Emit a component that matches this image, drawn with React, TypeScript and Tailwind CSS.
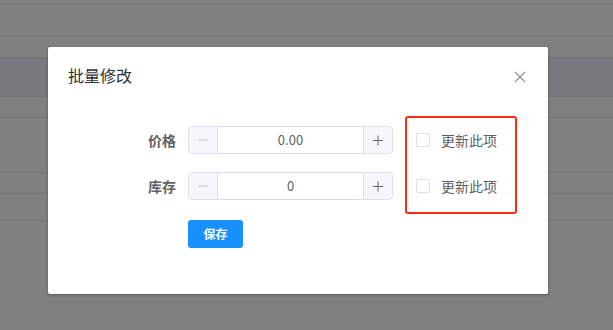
import React from 'react';

const font = { fontFamily: '"Noto Sans CJK SC", "Noto Sans", sans-serif' };

const NumberInput: React.FC<{ value: string }> = ({ value }) => (
  <div className="flex h-[28px] w-[205px] rounded-[4px] border border-[#dcdfe6] bg-white">
    <div className="flex w-[29px] items-center justify-center rounded-l-[4px] border-r border-[#dcdfe6] bg-[#f5f7fa] text-[#c0c4cc]">
      <svg width="12" height="12" viewBox="0 0 12 12">
        <path d="M1 6h10" stroke="currentColor" strokeWidth="1" />
      </svg>
    </div>
    <div className="flex flex-1 items-center justify-center text-[13px] text-[#606266]">{value}</div>
    <div className="flex w-[29px] items-center justify-center rounded-r-[4px] border-l border-[#dcdfe6] bg-[#f5f7fa] text-[#606266]">
      <svg width="12" height="12" viewBox="0 0 12 12">
        <path d="M1 6.5h10M6 1.5v10" stroke="currentColor" strokeWidth="1" />
      </svg>
    </div>
  </div>
);

const Row: React.FC<{ label: string; value: string }> = ({ label, value }) => (
  <div className="flex items-center">
    <div className="w-[80px] pr-[12px] text-right text-[14px] font-bold text-[#606266]">{label}</div>
    <NumberInput value={value} />
    <label className="ml-[23px] flex items-center">
      <span className="h-[14px] w-[14px] rounded-[2px] border border-[#dcdfe6] bg-white" />
      <span className="ml-[11px] text-[14px] text-[#606266]">更新此项</span>
    </label>
  </div>
);

const App: React.FC = () => {
  const rows = [4, 33, 21, 39, 21, 55, 21, 27];

  return (
    <div className="relative h-[330px] w-[613px] overflow-hidden bg-[#808080]" style={font}>
      {/* table behind the mask */}
      <div className="flex flex-col">
        {rows.map((h, i) => (
          <div
            key={i}
            className={`border-b border-[#727272] ${i === 3 ? 'bg-[#77797e]' : ''}`}
            style={{ height: h }}
          />
        ))}
      </div>

      {/* dialog */}
      <div className="absolute left-[48px] top-[47px] h-[247px] w-[500px] rounded-[2px] bg-white shadow-[0_1px_3px_rgba(0,0,0,0.3)]">
        <div className="flex items-center justify-between px-[20px] pt-[16px]">
          <span className="text-[16px] leading-6 text-[#303133]">批量修改</span>
          <svg width="12" height="12" viewBox="0 0 12 12" className="mr-[2px] mt-[4px] text-[#909399]">
            <path d="M1 1l10 10M11 1L1 11" stroke="currentColor" strokeWidth="1.2" />
          </svg>
        </div>

        <div className="mt-[39px] flex flex-col gap-[18px] pl-[60px]">
          <Row label="价格" value="0.00" />
          <Row label="库存" value="0" />
          <div className="pl-[80px] pt-[2px]">
            <button className="h-[28px] w-[55px] rounded-[3px] bg-[#1890ff] text-[12px] font-bold text-white">
              保存
            </button>
          </div>
        </div>
      </div>

      {/* red annotation box */}
      <div className="absolute left-[405px] top-[116px] h-[98px] w-[112px] rounded-[3px] border-2 border-[#ff2a1a]" />
    </div>
  );
};

export default App;
